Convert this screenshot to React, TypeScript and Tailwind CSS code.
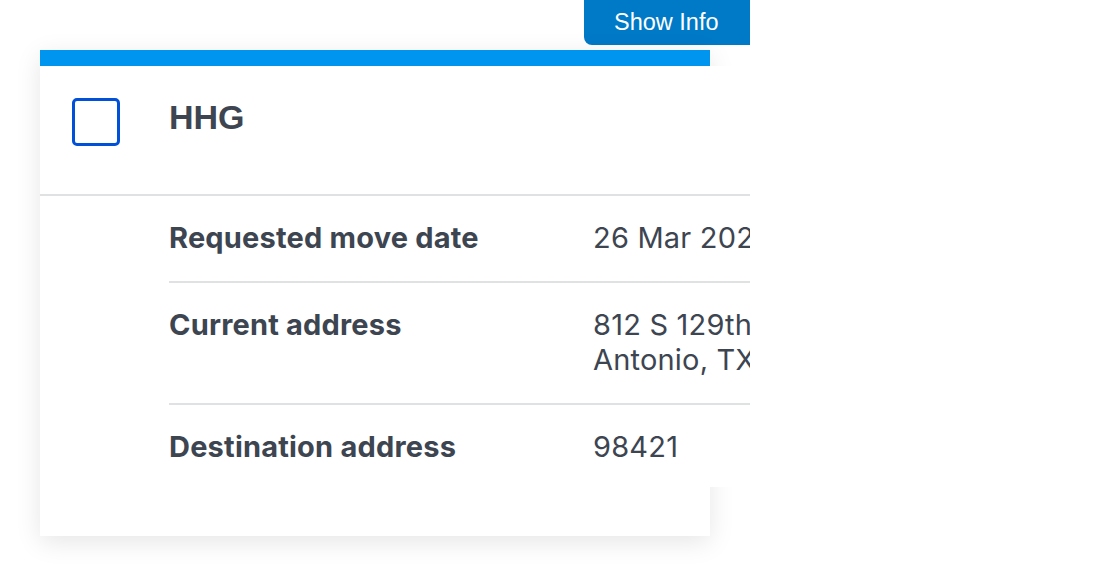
import React from 'react';

interface Row {
  label: string;
  value: string;
}

const rows: Row[] = [
  { label: 'Requested move date', value: '26 Mar 2020' },
  { label: 'Current address', value: '812 S 129th St, San Antonio, TX 78234' },
  { label: 'Destination address', value: '98421' },
];

const App: React.FC = () => {
  return (
    <div className="w-[750px] h-[576px] overflow-hidden bg-white font-['Inter',sans-serif] text-[#3d4551]">
      {/* Show Info tab */}
      <div className="pl-[584px]">
        <button className="block w-[200px] h-[45px] pl-[30px] text-left rounded-bl-[8px] bg-[#0079c7] text-white text-[23.5px] font-['Liberation_Sans',Arial,sans-serif]">
          Show Info
        </button>
      </div>

      {/* Shipment card */}
      <div className="mt-[5px] ml-[40px] w-[670px] bg-white border-t-[16px] border-[#0096f0] pb-[49px] shadow-[0_6px_24px_rgba(0,0,0,0.1)]">
        <div className="w-[710px] bg-white">
          <div className="h-[128px] flex items-start pt-[32px] pl-[32px]">
            <span className="w-[48px] h-[48px] rounded-[5px] border-[3px] border-[#0050d8] bg-white" />
            <h2 className="ml-[49px] mt-[-1px] leading-[40px] text-[34px] font-bold font-['Liberation_Sans',Arial,sans-serif]">HHG</h2>
          </div>
          <div className="border-t-2 border-[#dfe1e2] pl-[129px]">
            {rows.map((row, i) => (
              <div
                key={row.label}
                className={`flex pt-[24px] leading-[35px] text-[29px] ${i > 0 ? 'border-t-2 border-[#dfe1e2]' : ''} ${i === rows.length - 1 ? 'pb-[23px]' : 'pb-[26px]'}`}
              >
                <div className="w-[424px] shrink-0 font-bold tracking-[0.2px]">{row.label}</div>
                <div className="w-[330px] shrink-0 tracking-[0.2px]">{row.value}</div>
              </div>
            ))}
          </div>
        </div>
      </div>
    </div>
  );
};

export default App;
